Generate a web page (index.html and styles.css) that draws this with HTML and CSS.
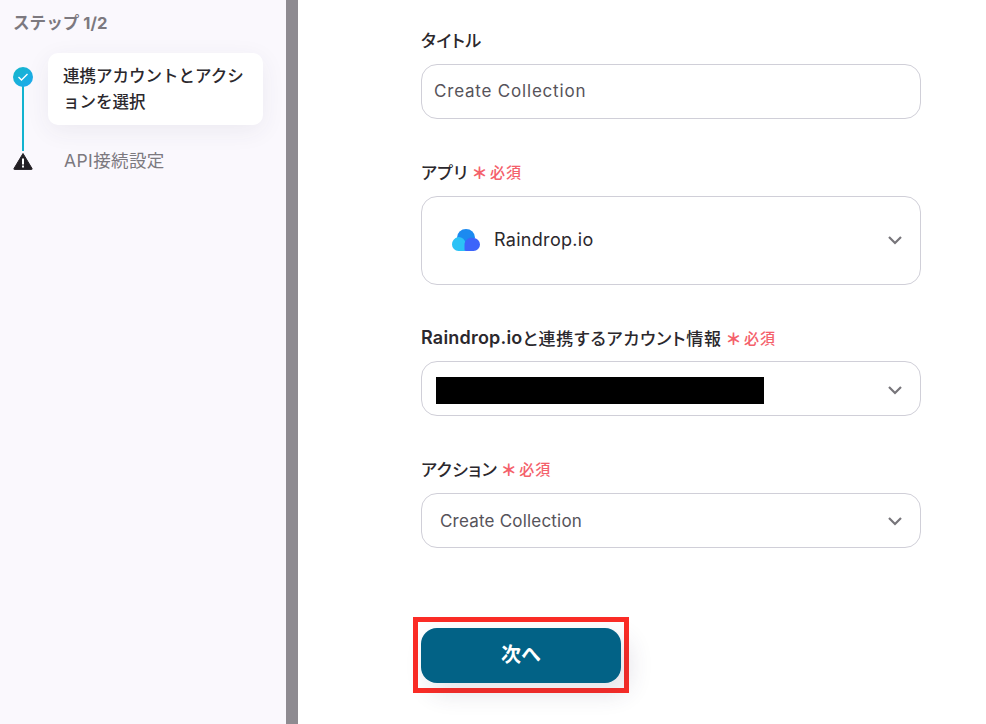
FILE: index.html
```html
<!DOCTYPE html>
<html lang="ja">
<head>
    <meta charset="UTF-8">
    <meta name="viewport" content="width=device-width, initial-scale=1.0">
    <title>ステップ 1/2</title>
    <link rel="stylesheet" href="styles.css">
</head>
<body>
    <div class="sidebar">
        <div class="step-count">ステップ 1/2</div>
        <div class="steps">
            <div class="step-line"></div>
            <div class="step step-active">
                <span class="step-icon step-done">
                    <svg width="12" height="10" viewBox="0 0 12 10"><path d="M1.5 5l3 3 6-6" fill="none" stroke="#fff" stroke-width="1.4"/></svg>
                </span>
                <div class="step-card">連携アカウントとアクションを選択</div>
            </div>
            <div class="step step-next">
                <span class="step-icon">
                    <svg width="20" height="18" viewBox="0 0 20 18"><path d="M10 1.5L19 16.5a.6.6 0 0 1-.5.9H1.500a.6.6 0 0 1-.5-.9z" fill="#231f24" stroke="#231f24" stroke-linejoin="round"/><rect x="9" y="6.500" width="2" height="6" fill="#fff"/><rect x="9" y="13.500" width="2" height="2" fill="#fff"/></svg>
                </span>
                <div class="step-label">API接続設定</div>
            </div>
        </div>
    </div>
    <div class="divider"></div>
    <div class="main">
        <div class="form-group group-title">
            <label class="field-label">タイトル</label>
            <div class="field field-text"><span class="field-value">Create Collection</span></div>
        </div>
        <div class="form-group group-app">
            <label class="field-label">アプリ<span class="required"><span class="star">＊</span>必須</span></label>
            <div class="field field-app">
                <svg class="app-logo" width="28" height="23" viewBox="0 0 28 23">
                    <path d="M5 9.500a9 8.500 0 0 1 18 0L20 17H7z" fill="#1b8af0"/>
                    <path d="M6 9a7 7 0 0 1 7.500 7v7H6.500A6.500 6.500 0 0 1 0 16.500 7.500 7.500 0 0 1 6 9z" fill="#2cc2f6"/>
                    <path d="M21.500 10a6.500 6.500 0 0 1 0 13H14a1.500 1.500 0 0 1-1.500-1.500V17a7 7 0 0 1 9-7z" fill="#3d64fa"/>
                </svg>
                <span class="app-name">Raindrop.io</span>
                <svg class="chevron" width="16" height="10" viewBox="0 0 16 10"><path d="M2 2l6 6 6-6" fill="none" stroke="#77757a" stroke-width="2.200"/></svg>
            </div>
        </div>
        <div class="form-group group-account">
            <label class="field-label"><span class="latin">Raindrop.io</span><span class="label-wide">と連携するアカウント情報</span><span class="required"><span class="star">＊</span>必須</span></label>
            <div class="field field-select field-account">
                <div class="redacted"></div>
                <svg class="chevron" width="16" height="10" viewBox="0 0 16 10"><path d="M2 2l6 6 6-6" fill="none" stroke="#77757a" stroke-width="2.200"/></svg>
            </div>
        </div>
        <div class="form-group group-action">
            <label class="field-label">アクション<span class="required"><span class="star">＊</span>必須</span></label>
            <div class="field field-select field-action">
                <span>Create Collection</span>
                <svg class="chevron" width="16" height="10" viewBox="0 0 16 10"><path d="M2 2l6 6 6-6" fill="none" stroke="#77757a" stroke-width="2.200"/></svg>
            </div>
        </div>
        <div class="next-box">
            <button class="next-button">次へ</button>
        </div>
    </div>
</body>
</html>
```

FILE: styles.css
```css
* {
    box-sizing: border-box;
}
html, body {
    height: 100%;
}
body {
    font-family: Inter, "Noto Sans CJK JP", sans-serif;
    display: flex;
    height: 724px;
    margin: 0;
    overflow: hidden;
    background-color: #fff;
    color: #2b282d;
}
.sidebar {
    width: 286px;
    flex-shrink: 0;
    background-color: #faf8fd;
    padding: 12px 0 0 13px;
}
.step-count {
    font-size: 16.600px;
    line-height: 22px;
    font-weight: 700;
    color: #7c797f;
}
.steps {
    position: relative;
    margin-top: 19px;
}
.step-line {
    position: absolute;
    left: 9px;
    top: 30px;
    width: 2px;
    height: 68px;
    background-color: #12b3d0;
}
.step {
    display: flex;
    align-items: flex-start;
}
.step-icon {
    width: 20px;
    height: 20px;
    flex-shrink: 0;
    display: flex;
    align-items: center;
    justify-content: center;
    position: relative;
}
.step-done {
    border-radius: 50%;
    margin-top: 14px;
    background: linear-gradient(135deg, #14b8c8, #1ea7f0);
}
.step-card {
    width: 215px;
    height: 72px;
    margin-left: 15px;
    padding: 10px 15px;
    background-color: #fff;
    border-radius: 10px;
    box-shadow: 0 6px 24px rgba(60, 50, 90, 0.07);
    font-size: 16.500px;
    line-height: 26px;
    font-weight: 500;
}
.step-next {
    margin-top: 23px;
}
.step-next .step-icon {
    margin-top: 3px;
}
.step-label {
    margin: 1px 0 0 31px;
    font-size: 17.500px;
    letter-spacing: 0.4px;
    line-height: 24px;
    color: #7c797f;
}
.divider {
    width: 12px;
    flex-shrink: 0;
    background-color: #8e8b91;
}
.main {
    flex: 1;
    padding: 28px 0 0 123px;
}
.form-group {
    width: 500px;
}
.field-label {
    display: flex;
    align-items: center;
    height: 22px;
    font-size: 17px;
    font-weight: 500;
    letter-spacing: 0.5px;
    font-feature-settings: "palt";
}
.latin {
    font-size: 18px;
    font-weight: 600;
    letter-spacing: 0.2px;
}
.label-wide {
    letter-spacing: 0.9px;
}
.required {
    display: flex;
    align-items: center;
    margin-left: 5px;
    font-size: 15px;
    font-weight: 500;
    letter-spacing: 1px;
    color: #f4616b;
}
.star {
    margin: 2px 3px 0 0;
    font-size: 16px;
    font-weight: 900;
}
.field {
    display: flex;
    align-items: center;
    margin-top: 14px;
    background-color: #fff;
    border: 1px solid #d0cfd8;
    border-radius: 16px;
    font-size: 17px;
    letter-spacing: 0.2px;
    color: #56535a;
}
.field-text {
    height: 55px;
    padding-left: 12px;
    letter-spacing: 0.8px;
}
.field-value {
    margin-top: -2px;
}
.group-app {
    margin-top: 41px;
}
.field-app {
    height: 89px;
    padding: 0 0 2px 30px;
    margin-top: 14px;
}
.app-name {
    margin-left: 14px;
    color: #2b282d;
    font-size: 18px;
    letter-spacing: 0.3px;
}
.chevron {
    margin-left: auto;
    margin-right: 17px;
}
.group-account {
    margin-top: 41px;
}
.field-select {
    height: 55px;
    margin-top: 13px;
    padding-left: 14px;
}
.field-account .chevron {
    margin-top: 2px;
}
.redacted {
    width: 328px;
    height: 27px;
    margin-top: 4px;
    background-color: #000;
}
.group-action {
    margin-top: 41px;
}
.group-action .field {
    margin-top: 14px;
    padding-left: 18px;
}
.next-box {
    width: 216px;
    height: 76px;
    margin: 69px 0 0 -8px;
    padding: 6px 3px 5px 3px;
    border: 5px solid #fb2c26;
}
.next-button {
    display: block;
    width: 200px;
    height: 55px;
    padding-bottom: 5px;
    border: none;
    border-radius: 16px;
    background-color: #026286;
    box-shadow: 8px 10px 24px rgba(60, 50, 90, 0.14);
    color: #fff;
    font-family: inherit;
    font-size: 20px;
    font-weight: 700;
}
```
